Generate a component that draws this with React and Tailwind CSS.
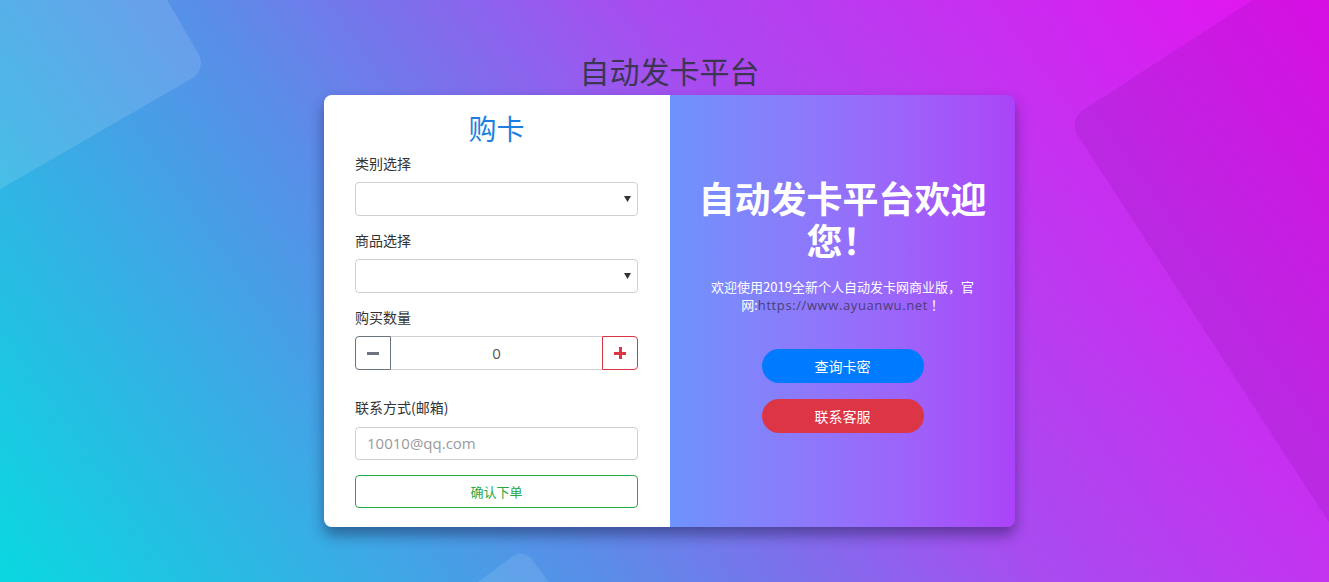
import React from "react";

const CJK = { fontFamily: '"Noto Sans CJK SC", "Open Sans", sans-serif' };

function Caret() {
  return (
    <svg width="7" height="6" viewBox="0 0 7 6" className="fill-[#333]">
      <path d="M0 0 L7 0 L3.5 6 Z" />
    </svg>
  );
}

function SelectBox() {
  return (
    <div className="mt-[9px] h-[34px] rounded-[4px] border border-[#cfcfcf] bg-white flex items-center justify-end pr-[6px]">
      <Caret />
    </div>
  );
}

function Label({ children, className = "" }) {
  return (
    <div className={`text-[14px] leading-[20px] text-[#333] ${className}`}>
      {children}
    </div>
  );
}

export default function App() {
  return (
    <div
      className="relative h-screen w-full overflow-hidden bg-[linear-gradient(55deg,#0ad8e0_0%,#5a8de8_35%,#a84cf0_60%,#e810f0_100%)]"
      style={CJK}
    >
      {/* ── decorative background shapes ── */}
      <div className="absolute left-[-384px] top-[-272px] w-[500px] h-[500px] rotate-[60deg] rounded-[18px] bg-white/[0.12] pointer-events-none" />
      <div className="absolute left-[1202px] top-[-127px] w-[700px] h-[700px] -rotate-[33deg] rounded-[18px] bg-[#3a0060]/[0.10] pointer-events-none" />
      <div className="absolute left-[402px] top-[588px] w-[200px] h-[200px] rotate-[54deg] rounded-[14px] bg-white/[0.10] pointer-events-none" />

      {/* ── page content ── */}
      <div className="relative z-10 flex flex-col items-center pt-[52px] pl-[10px]">
        <h1 className="text-[30px] leading-[36px] font-normal text-[#3c3653] mb-[7px]">
          自动发卡平台
        </h1>

        <div className="flex w-[691px] rounded-[8px] overflow-hidden shadow-[0_8px_14px_rgba(20,20,60,0.45)]">
          {/* Left: buy form */}
          <div className="w-[346px] bg-white pt-[16px] pb-[19px] pl-[31px] pr-[32px]">
            <h2 className="text-center text-[28px] leading-[34px] font-normal text-[#1c7fe0]">
              购卡
            </h2>

            <Label className="mt-[8px]">类别选择</Label>
            <SelectBox />

            <Label className="mt-[14px]">商品选择</Label>
            <SelectBox />

            <Label className="mt-[14px]">购买数量</Label>
            <div className="mt-[9px] flex h-[34px]">
              <button className="w-[36px] h-full rounded-l-[4px] border border-[#6c757d] flex items-center justify-center">
                <span className="block w-[12px] h-[3px] bg-[#6c757d]" />
              </button>
              <div
                className="flex-1 border-y border-[#cfcfcf] flex items-center justify-center text-[15px] text-[#555]"
                style={{ fontFamily: '"Open Sans", sans-serif' }}
              >
                0
              </div>
              <button className="w-[36px] h-full rounded-r-[4px] border border-[#dc3545] flex items-center justify-center relative">
                <span className="block w-[12px] h-[3px] bg-[#dc3545]" />
                <span className="absolute block w-[3px] h-[12px] bg-[#dc3545]" />
              </button>
            </div>

            <Label className="mt-[27px]">联系方式(邮箱)</Label>
            <div
              className="mt-[10px] h-[33px] rounded-[4px] border border-[#cfcfcf] flex items-center pl-[11px] text-[15px] text-[#9a9a9a]"
              style={{ fontFamily: '"Open Sans", sans-serif' }}
            >
              10010@qq.com
            </div>

            <button className="mt-[15px] w-full h-[33px] rounded-[4px] border border-[#28a745] text-[13px] text-[#28a745] flex items-center justify-center">
              确认下单
            </button>
          </div>

          {/* Right: welcome */}
          <div className="w-[345px] bg-linear-to-r from-[#6d93fc] to-[#ab43f8] pt-[81px] px-[27px] flex flex-col items-center text-white">
            <h2 className="text-center text-[36px] leading-[42px] font-bold">
              自动发卡平台欢迎您！
            </h2>
            <p className="mt-[18px] px-[10px] text-center text-[13px] leading-[18px]">
              欢迎使用2019全新个人自动发卡网商业版，官网:
              <span
                className="text-[#4a3f78] tracking-[0.6px]"
                style={{ fontFamily: '"Open Sans", sans-serif' }}
              >
                https://www.ayuanwu.net
              </span>
              {"  "}！
            </p>
            <button className="mt-[35px] w-[162px] h-[34px] rounded-full bg-[#007bff] text-[14px] text-white flex items-center justify-center">
              查询卡密
            </button>
            <button className="mt-[16px] w-[162px] h-[34px] rounded-full bg-[#dc3545] text-[14px] text-white flex items-center justify-center">
              联系客服
            </button>
          </div>
        </div>
      </div>
    </div>
  );
}
